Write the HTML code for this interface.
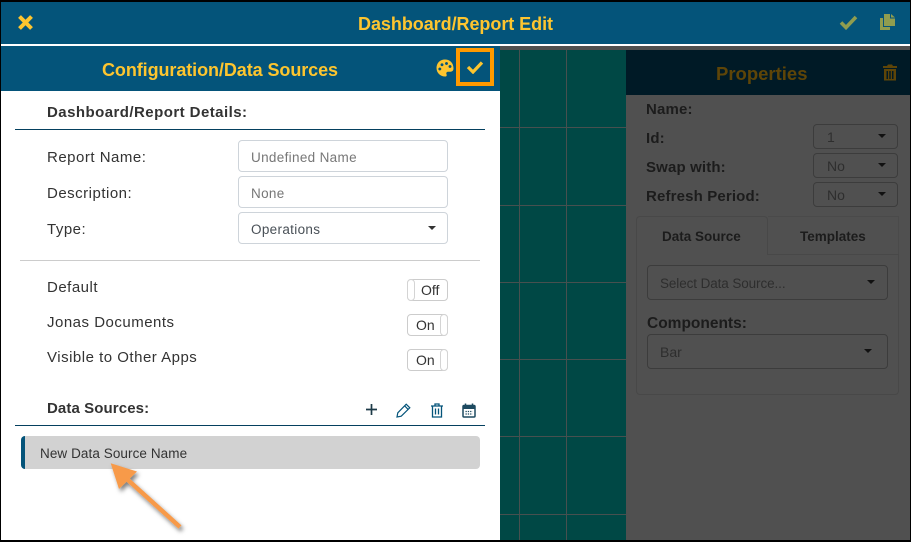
<!DOCTYPE html>
<html><head><meta charset="utf-8">
<style>
html,body{margin:0;padding:0}
body{width:911px;height:542px;overflow:hidden;position:relative;background:#505050;font-family:"Liberation Sans",sans-serif;color:#333}
div,span,svg{position:absolute;box-sizing:border-box}
.t{white-space:nowrap;line-height:20px}
.b{font-weight:700}
.lb{font-size:15px;letter-spacing:.5px;color:#333}
.inp{left:238px;width:210px;height:32px;border:1px solid #ced4da;border-radius:4px;background:#fff;font-size:13.5px;line-height:32px;padding-left:12px;padding-top:1px;color:#777;letter-spacing:.33px}
.caret{width:0;height:0;border-left:4.5px solid transparent;border-right:4.5px solid transparent;border-top:4.5px solid #333}
.tog{left:407px;width:41px;height:22px;border:1px solid #ccc;border-radius:4px;background:#fff;font-size:14px;line-height:21px;color:#333}
.hd{top:-1px;width:8px;height:22px;border:1px solid #d4d4d4;border-radius:4px;background:#fff}
.hl{background:#47504f;height:1px}
.vl{background:#47504f;width:1px;top:50px;height:490px}
.sel{left:813px;width:85px;height:25px;border:1px solid #3c3c3c;border-radius:4px;font-size:14px;line-height:25px;padding-left:13px;color:#2e2e2e}
.pl{left:646px;font-size:15px;letter-spacing:.15px;font-weight:700;color:#1c1c1c}
</style></head><body>
<!-- top bar -->
<div style="left:0;top:0;width:911px;height:2px;background:#000"></div>
<div style="left:0;top:2px;width:911px;height:42px;background:#04547a"></div>
<div style="left:0;top:44px;width:911px;height:2px;background:#fff"></div>
<svg style="left:17px;top:14px" width="17" height="17" viewBox="0 0 17 17"><path d="M2.500 2.500L14.500 14.500M14.500 2.500L2.500 14.500" stroke="#fdc52f" stroke-width="4" fill="none"/></svg>
<div class="t b" style="left:358px;top:14px;font-size:18px;color:#fdc52f;letter-spacing:-.05px">Dashboard/Report Edit</div>
<svg style="left:839px;top:14px" width="19" height="16" viewBox="0 0 19 16"><path d="M2 8.500L7 13.500L17 3" stroke="#8f9d4f" stroke-width="3.600" fill="none"/></svg>
<svg style="left:880px;top:14px" width="15" height="16" viewBox="0 0 15 16"><path d="M4 0H10V4.500H15V12H4Z" fill="#8f9d4f"/><path d="M11 0L15 3.500H11Z" fill="#8f9d4f"/><path d="M0 4H3V13H10V16H0Z" fill="#8f9d4f"/></svg>

<!-- canvas -->
<div style="left:500px;top:46px;width:126px;height:494px;background:#004845"></div>
<div style="left:500px;top:46px;width:126px;height:4px;background:#505050"></div>
<div class="vl" style="left:519px"></div><div class="vl" style="left:566px"></div>
<div class="hl" style="left:500px;top:127px;width:126px"></div>
<div class="hl" style="left:500px;top:205px;width:126px"></div>
<div class="hl" style="left:500px;top:282px;width:126px"></div>
<div class="hl" style="left:500px;top:359px;width:126px"></div>
<div class="hl" style="left:500px;top:436px;width:126px"></div>
<div class="hl" style="left:500px;top:514px;width:126px"></div>

<!-- properties -->
<div style="left:626px;top:46px;width:285px;height:494px;background:#505050"></div>
<div style="left:626px;top:50px;width:285px;height:45px;background:#001a26"></div>
<div class="t b" style="left:716px;top:64px;font-size:18.5px;color:#5e4508">Properties</div>
<svg style="left:883px;top:64px" width="14" height="17" viewBox="0 0 14 17"><path d="M5 0.500H9L10 2H14V4H0V2H4Z" fill="#5e4508"/><path d="M1 5H13V16.500H1ZM3.500 7V15H5V7ZM6.300 7V15H7.700V7ZM9 7V15H10.500V7Z" fill="#5e4508" fill-rule="evenodd"/></svg>
<div class="t pl" style="top:100px">Name:</div>
<div class="t pl" style="top:129px">Id:</div>
<div class="t pl" style="top:158px">Swap with:</div>
<div class="t pl" style="top:187px">Refresh Period:</div>
<div class="sel" style="top:124px">1</div><div class="caret" style="left:878px;top:134px;border-top-color:#111"></div>
<div class="sel" style="top:153px">No</div><div class="caret" style="left:878px;top:163px;border-top-color:#111"></div>
<div class="sel" style="top:182px">No</div><div class="caret" style="left:878px;top:192px;border-top-color:#111"></div>
<div style="left:636px;top:254px;width:263px;height:141px;border:1px solid #484848;border-radius:0 0 4px 4px"></div>
<div style="left:636px;top:216px;width:132px;height:39px;background:#505050;border:1px solid #484848;border-bottom:none;border-radius:4px 4px 0 0"></div>
<div style="left:768px;top:216px;width:131px;height:38px;border-top:1px solid #4a4a4a;border-right:1px solid #4a4a4a"></div>
<div class="t b" style="left:662px;top:227px;font-size:13.5px;color:#1c1c1c">Data Source</div>
<div class="t b" style="left:800px;top:227px;font-size:13.5px;color:#1c1c1c">Templates</div>
<div style="left:647px;top:265px;width:241px;height:35px;border:1px solid #3c3c3c;border-radius:4px;font-size:13.5px;letter-spacing:-.1px;line-height:34px;padding-left:12px;padding-top:1px;color:#2e2e2e">Select Data Source...</div>
<div class="caret" style="left:867px;top:280px;border-top-color:#111"></div>
<div class="t pl" style="left:647px;top:314px;font-size:15.5px;letter-spacing:0">Components:</div>
<div style="left:647px;top:334px;width:241px;height:35px;border:1px solid #3c3c3c;border-radius:4px;font-size:14px;line-height:34px;padding-left:12px;color:#2e2e2e">Bar</div>
<div class="caret" style="left:864px;top:349px;border-top-color:#111"></div>

<!-- left panel -->
<div style="left:0;top:46px;width:500px;height:45px;background:#04547a"></div>
<div style="left:0;top:91px;width:500px;height:449px;background:#fff"></div>
<div class="t b" style="left:102px;top:60px;font-size:18px;color:#fdc52f;letter-spacing:-.08px">Configuration/Data Sources</div>
<svg style="left:436px;top:59px" width="18" height="18" viewBox="0 0 18 18"><path fill-rule="evenodd" d="M9 .5C4 .5.5 4 .5 9s4 8.500 8.500 8.500c1.800 0 2-1.300 1.500-2.300-.6-1.300.2-2.500 1.600-2.500h2.400c2 0 3-1.400 3-3.300C17.500 3.500 13.500.500 9 .5ZM3.800 8.500a1.500 1.500 0 1 0 .01 0ZM6 4.200a1.500 1.500 0 1 0 .01 0ZM10.500 3a1.500 1.500 0 1 0 .01 0ZM14 6a1.500 1.500 0 1 0 .01 0Z" fill="#fdc52f"/></svg>
<div style="left:456px;top:48px;width:38px;height:38px;border:4px solid #f90"></div>
<svg style="left:466px;top:60px" width="18" height="14" viewBox="0 0 18 14"><path d="M2 7L7 12L16 2.500" stroke="#fdc52f" stroke-width="3.200" fill="none"/></svg>

<div class="t b" style="left:47px;top:103px;font-size:15px;letter-spacing:.45px;color:#333">Dashboard/Report Details:</div>
<div style="left:15px;top:129px;width:470px;height:1px;background:#04405f"></div>

<div class="t lb" style="left:47px;top:148px">Report Name:</div>
<div class="t lb" style="left:47px;top:184px">Description:</div>
<div class="t lb" style="left:47px;top:220px">Type:</div>
<div class="inp" style="top:140px">Undefined Name</div>
<div class="inp" style="top:176px">None</div>
<div class="inp" style="top:212px;color:#495057">Operations</div>
<div class="caret" style="left:428px;top:226px"></div>
<div style="left:20px;top:260px;width:460px;height:1px;background:#ccc"></div>

<div class="t lb" style="left:47px;top:278px">Default</div>
<div class="t lb" style="left:47px;top:313px">Jonas Documents</div>
<div class="t lb" style="left:47px;top:348px">Visible to Other Apps</div>
<div class="tog" style="top:279px"><span class="hd" style="left:-1px"></span><span style="left:13px;top:0">Off</span></div>
<div class="tog" style="top:314px"><span style="left:8px;top:0">On</span><span class="hd" style="left:32px"></span></div>
<div class="tog" style="top:349px"><span style="left:8px;top:0">On</span><span class="hd" style="left:32px"></span></div>

<div class="t b" style="left:47px;top:399px;font-size:15px;letter-spacing:.1px">Data Sources:</div>
<svg style="left:365px;top:403px" width="13" height="13" viewBox="0 0 13 13"><path d="M6.500 1V12M1 6.500H12" stroke="#1d3a48" stroke-width="1.700" fill="none"/></svg>
<svg style="left:396px;top:403px" width="15" height="15" viewBox="0 0 15 15"><path d="M1 14L1.800 9.800L10.200 1.200L13.800 4.800L5.200 13.200ZM8.800 3L12 6.300" stroke="#04547a" stroke-width="1.200" fill="none"/></svg>
<svg style="left:430px;top:403px" width="14" height="15" viewBox="0 0 14 15"><path d="M1 3H13M5 3V1H9V3M2.500 3V14H11.500V3M5.500 5.500V11.500M8.500 5.500V11.500" stroke="#04547a" stroke-width="1.300" fill="none"/></svg>
<svg style="left:462px;top:403px" width="14" height="15" viewBox="0 0 14 15"><rect x="1" y="2.500" width="12" height="11.500" rx="1" fill="none" stroke="#1d4a60" stroke-width="1.500"/><rect x="1" y="2.500" width="12" height="3.500" fill="#1d4a60"/><path d="M3.500 0.500V3M10.500 0.500V3" stroke="#1d4a60" stroke-width="1.500"/><path d="M3.500 8.500H10.500M3.500 11H10.500" stroke="#1d4a60" stroke-width="1.200" stroke-dasharray="1.300 1"/></svg>
<div style="left:15px;top:425px;width:470px;height:1px;background:#04405f"></div>

<div style="left:21px;top:436px;width:459px;height:33px;background:#d2d2d2;border-left:4px solid #04547a;border-radius:4px"></div>
<div class="t" style="left:40px;top:444px;font-size:13.5px;letter-spacing:.08px;color:#333">New Data Source Name</div>

<!-- arrow -->
<svg style="left:100px;top:455px" width="100" height="85" viewBox="0 0 100 85">
<defs><filter id="s" x="-30%" y="-30%" width="160%" height="160%"><feDropShadow dx="2" dy="3" stdDeviation="2" flood-color="#000" flood-opacity=".5"/></filter></defs>
<g filter="url(#s)"><path d="M80 72L28 25" stroke="#f79a4a" stroke-width="4.500" fill="none"/><path d="M10.700 8.300L37 16.500L19 34Z" fill="#f79a4a"/></g></svg>

<!-- frame -->
<div style="left:0;top:0;width:1px;height:542px;background:#000"></div>
<div style="left:910px;top:0;width:1px;height:542px;background:#000"></div>
<div style="left:0;top:540px;width:911px;height:2px;background:#000"></div>
</body></html>
